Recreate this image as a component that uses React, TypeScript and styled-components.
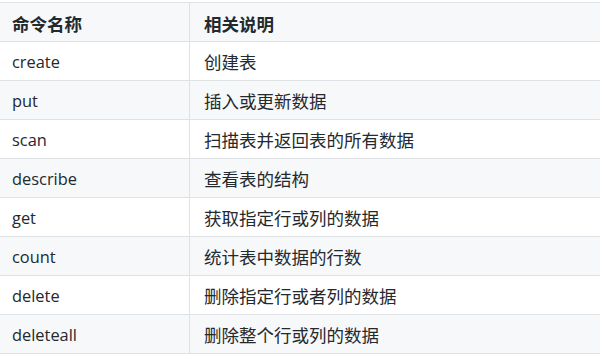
import React from 'react';
import styled, { createGlobalStyle } from 'styled-components';

const GlobalStyle = createGlobalStyle`
	html, body {
		margin: 0;
		padding: 0;
		background: #ffffff;
		overflow: hidden;
	}
	body {
		font-family: 'Open Sans', 'Noto Sans CJK SC', sans-serif;
		color: #24292e;
	}
`;

type Command = {
	name: string;
	desc: string;
};

const commands: Command[] = [
	{ name: 'create', desc: '创建表' },
	{ name: 'put', desc: '插入或更新数据' },
	{ name: 'scan', desc: '扫描表并返回表的所有数据' },
	{ name: 'describe', desc: '查看表的结构' },
	{ name: 'get', desc: '获取指定行或列的数据' },
	{ name: 'count', desc: '统计表中数据的行数' },
	{ name: 'delete', desc: '删除指定行或者列的数据' },
	{ name: 'deleteall', desc: '删除整个行或列的数据' },
];

const App: React.FC = () => {
	return (
		<>
			<GlobalStyle />
			<Table>
				<Row striped>
					<HeadCell first>命令名称</HeadCell>
					<HeadCell>相关说明</HeadCell>
				</Row>
				{commands.map((cmd, i) => (
					<Row key={cmd.name} striped={i % 2 === 1}>
						<NameCell>{cmd.name}</NameCell>
						<DescCell>{cmd.desc}</DescCell>
					</Row>
				))}
			</Table>
		</>
	);
};

// left edge sits one pixel off-screen, right edge runs to the frame
const Table = styled.div`
	margin: 2px 0 0 -1px;
	width: 601px;
	border-top: 1px solid #dfe2e5;
`;

const Row = styled.div<{ striped?: boolean }>`
	display: grid;
	grid-template-columns: 190px 1fr;
	height: 39px;
	box-sizing: border-box;
	border-bottom: 1px solid #dfe2e5;
	background: ${(props) => (props.striped ? '#f6f8fa' : '#ffffff')};
`;

const Cell = styled.div<{ first?: boolean }>`
	display: flex;
	align-items: center;
	border-left: 1px solid #dfe2e5;
	padding-left: ${(props) => (props.first ? '12px' : '14px')};
	white-space: nowrap;
	overflow: hidden;
`;

const HeadCell = styled(Cell)`
	font-family: 'Noto Sans CJK SC', sans-serif;
	font-weight: 700;
	font-size: 17.5px;
	padding-top: 2px;
`;

const NameCell = styled(Cell).attrs({ first: true })`
	font-family: 'Open Sans', sans-serif;
	font-size: 16.4px;
`;

const DescCell = styled(Cell)`
	font-family: 'Noto Sans CJK SC', sans-serif;
	font-size: 17.5px;
`;

export default App;
